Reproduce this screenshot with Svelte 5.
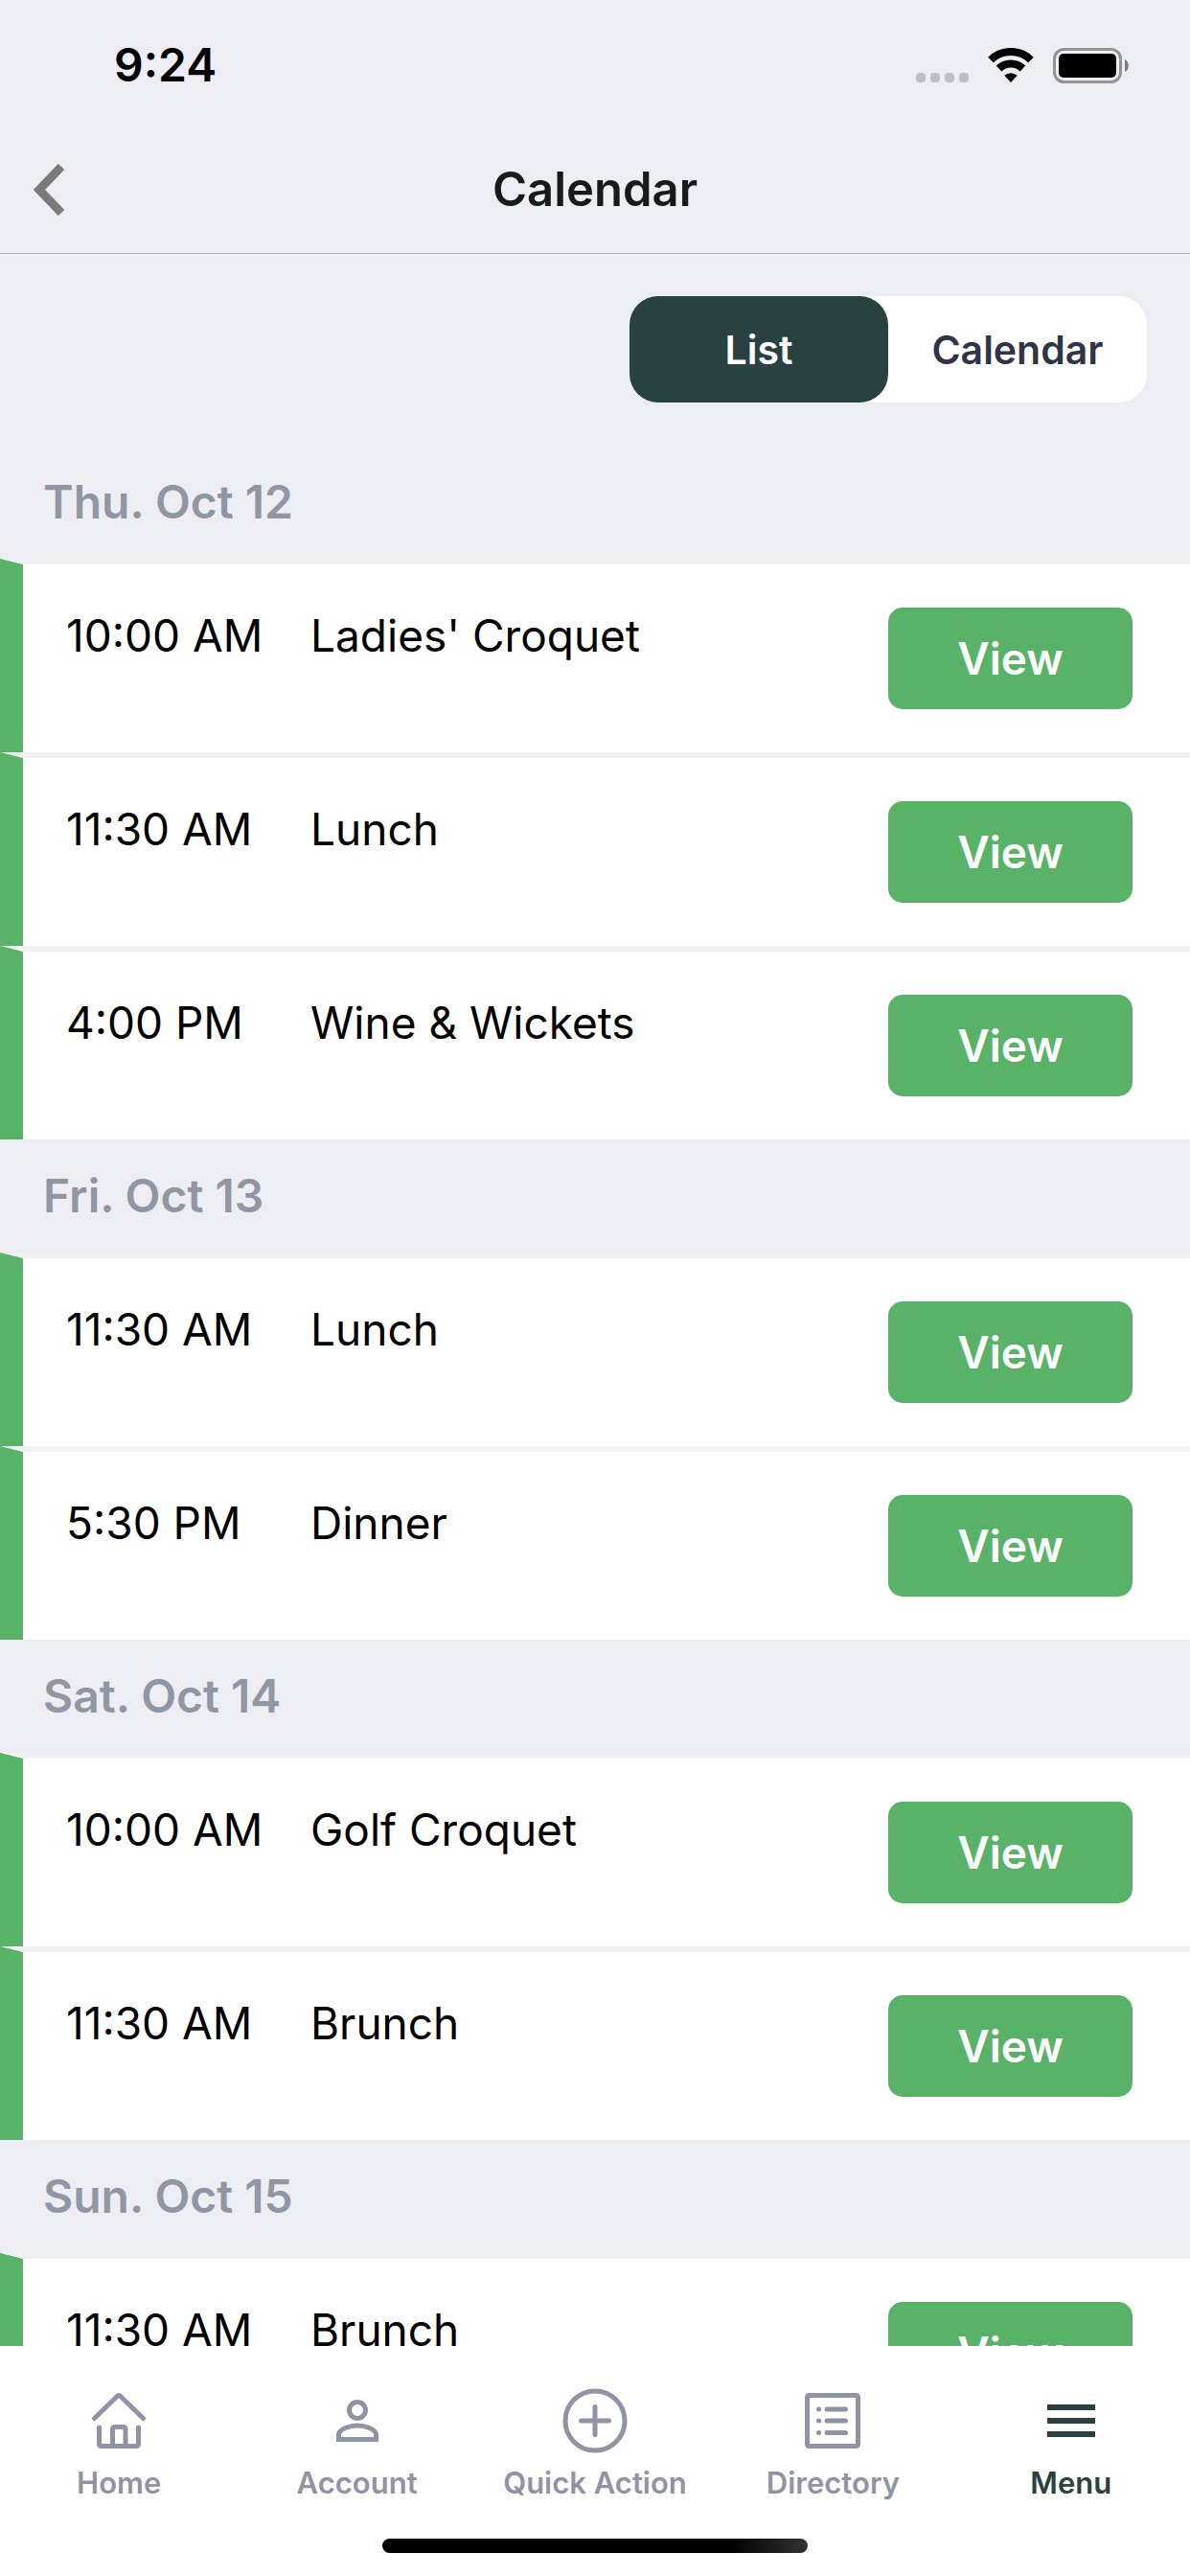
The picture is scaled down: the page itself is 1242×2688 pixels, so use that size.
<script>
  let view = $state('list')

  const views = [
    { id: 'list', label: 'List' },
    { id: 'calendar', label: 'Calendar' }
  ]

  const days = [
    {
      date: 'Thu. Oct 12',
      events: [
        { time: '10:00 AM', name: "Ladies' Croquet" },
        { time: '11:30 AM', name: 'Lunch' },
        { time: '4:00 PM', name: 'Wine & Wickets' }
      ]
    },
    {
      date: 'Fri. Oct 13',
      events: [
        { time: '11:30 AM', name: 'Lunch' },
        { time: '5:30 PM', name: 'Dinner' }
      ]
    },
    {
      date: 'Sat. Oct 14',
      events: [
        { time: '10:00 AM', name: 'Golf Croquet' },
        { time: '11:30 AM', name: 'Brunch' }
      ]
    },
    {
      date: 'Sun. Oct 15',
      events: [{ time: '11:30 AM', name: 'Brunch' }]
    }
  ]

  const tabs = [
    { id: 'home', label: 'Home' },
    { id: 'account', label: 'Account' },
    { id: 'quick', label: 'Quick Action' },
    { id: 'directory', label: 'Directory' },
    { id: 'menu', label: 'Menu' }
  ]
</script>

{#snippet icon(id)}
  <svg class="icon" viewBox="0 0 72 72" aria-hidden="true">
    {#if id == 'home'}
      <path d="M10.500 33.500 34.500 10.200a2 2 0 0 1 3 0L61.500 33.500M15.500 43v17.500a2 2 0 0 0 2 2h37a2 2 0 0 0 2-2V43M29.500 62V44.500a2 2 0 0 1 2-2h9.500a2 2 0 0 1 2 2V62" />
    {:else if id == 'account'}
      <circle cx="36" cy="25" r="8.500" />
      <path class="sharp" d="M16.500 55.500V50.500c0-6 12-9.500 19.500-9.500S55.500 44.500 55.500 50.500v5z" />
    {:else if id == 'quick'}
      <circle cx="36" cy="36" r="31" />
      <path d="M36 21.500v29M21.500 36h29" />
    {:else if id == 'directory'}
      <rect x="9.500" y="9.500" width="53" height="53" rx="2" />
      <path d="M30 24h19.500M30 36h19.500M30 48.500h19.500M21.500 24h.1M21.500 36h.1M21.500 48.500h.1" />
    {:else}
      <path class="bars" d="M11 22h50M11 36h50M11 50h50" />
    {/if}
  </svg>
{/snippet}

<div class="screen">
  <div class="status">
    <span class="clock">9:24</span>
    <div class="signals">
      <svg width="55" height="11" viewBox="0 0 55 11" fill="#bebfc3" aria-hidden="true">
        <rect x="0" width="10" height="10" rx="4" />
        <rect x="15" width="10" height="10" rx="4" />
        <rect x="30" width="10" height="10" rx="4" />
        <rect x="45" width="10" height="10" rx="4" />
      </svg>
      <svg width="48" height="37" viewBox="0 0 48 37" aria-hidden="true">
        <path class="wave" d="M3 12.500a30 30 0 0 1 42 0M11.500 21.500a18 18 0 0 1 25 0" />
        <path d="M24 36 17.300 28.800a10 10 0 0 1 13.400 0z" />
      </svg>
      <svg width="80" height="37" viewBox="0 0 80 37" aria-hidden="true">
        <rect x="1.500" y="1.500" width="69" height="34" rx="10" fill="none" stroke="#939396" stroke-width="3" />
        <rect x="6" y="6" width="60" height="25" rx="5" />
        <path d="M75 12c5 2 5 11 0 13z" fill="#7d7d80" />
      </svg>
    </div>
  </div>

  <header>
    <button class="back" aria-label="Back">
      <svg width="34" height="54" viewBox="0 0 34 54" aria-hidden="true">
        <path d="M30 3 7 27l23 24" />
      </svg>
    </button>
    <h1>Calendar</h1>
  </header>

  <main>
    <div class="switch">
      {#each views as v}
        <button class:active={view == v.id} aria-pressed={view == v.id} onclick={() => (view = v.id)}>
          {v.label}
        </button>
      {/each}
    </div>

    {#each days as day}
      <section>
        <h2>{day.date}</h2>
        <ul>
          {#each day.events as event}
            <li>
              <time>{event.time}</time>
              <span class="name">{event.name}</span>
              <button class="open">View</button>
            </li>
          {/each}
        </ul>
      </section>
    {/each}
  </main>

  <footer>
    <nav>
      {#each tabs as tab}
        <a href="#{tab.id}" class:current={tab.id == 'menu'}>
          {@render icon(tab.id)}
          {tab.label}
        </a>
      {/each}
    </nav>
    <div class="indicator"></div>
  </footer>
</div>

<style>
  :global(body) {
    margin: 0;
  }

  .screen {
    display: flex;
    flex-direction: column;
    height: 100vh;
    overflow: hidden;
    background: #edeef3;
    color: #000;
    font-family: Inter, 'Liberation Sans', sans-serif;
    font-size: 46px;
    line-height: 58px;
  }

  button {
    padding: 0;
    border: 0;
    background: none;
    font: inherit;
    cursor: pointer;
  }

  .status {
    display: flex;
    flex: none;
    align-items: center;
    justify-content: space-between;
    height: 132px;
    padding: 4px 63px 0 119px;
    box-sizing: border-box;
  }

  .clock {
    font-size: 48px;
    font-weight: 600;
  }

  .signals {
    display: flex;
    align-items: flex-end;
    gap: 20px;
  }

  .wave {
    fill: none;
    stroke: #000;
    stroke-width: 8;
  }

  header {
    display: grid;
    flex: none;
    grid-template-columns: 1fr auto 1fr;
    align-items: center;
    height: 132px;
    border-bottom: 1px solid #b0b1b5;
  }

  .back {
    justify-self: start;
    padding: 0 34px;
  }

  .back svg {
    display: block;
    fill: none;
    stroke: #7a7a7a;
    stroke-width: 9;
  }

  h1 {
    margin: 0;
    color: #18191a;
    font-size: 49px;
    font-weight: 600;
  }

  main {
    flex: 1;
    min-height: 0;
    overflow: hidden;
  }

  .switch {
    display: flex;
    width: 540px;
    margin: 44px 45px 45px auto;
    border-radius: 30px;
    background: #fff;
  }

  .switch button {
    flex: 1;
    height: 111px;
    border-radius: 30px;
    color: #2e3547;
    font-size: 41px;
    font-weight: 600;
  }

  .switch .active {
    background: #2a4141;
    color: #fff;
  }

  h2 {
    margin: 0;
    padding: 30px 45px;
    color: #9196a4;
    font-size: 48px;
    font-weight: 600;
  }

  ul {
    margin: 0;
    padding: 0;
    list-style: none;
  }

  li {
    display: grid;
    grid-template-columns: 255px 1fr 255px;
    align-items: start;
    padding: 45px 60px 45px 45px;
    border-top: 6px solid #f1f1f1;
    border-left: 24px solid #58b267;
    background: #fff;
  }

  .open {
    height: 106px;
    border-radius: 15px;
    background: #58b267;
    color: #fff;
    font-weight: 600;
  }

  footer {
    flex: none;
    height: 240px;
    background: #fff;
  }

  nav {
    display: grid;
    grid-template-columns: repeat(5, 1fr);
    padding-top: 42px;
  }

  nav a {
    display: flex;
    flex-direction: column;
    align-items: center;
    gap: 9px;
    color: #9093a3;
    font-size: 31px;
    font-weight: 600;
    line-height: 40px;
    text-decoration: none;
    white-space: nowrap;
  }

  nav a.current {
    color: #2a4141;
  }

  .icon {
    width: 72px;
    height: 72px;
    fill: none;
    stroke: currentColor;
    stroke-width: 5;
    stroke-linecap: round;
    stroke-linejoin: round;
  }

  .icon .sharp {
    stroke-linejoin: miter;
  }

  .icon .bars {
    stroke-width: 6;
    stroke-linecap: butt;
  }

  .indicator {
    width: 444px;
    height: 15px;
    margin: 38px auto 0;
    border-radius: 8px;
    background: linear-gradient(90deg, #000 82%, #333);
  }
</style>
